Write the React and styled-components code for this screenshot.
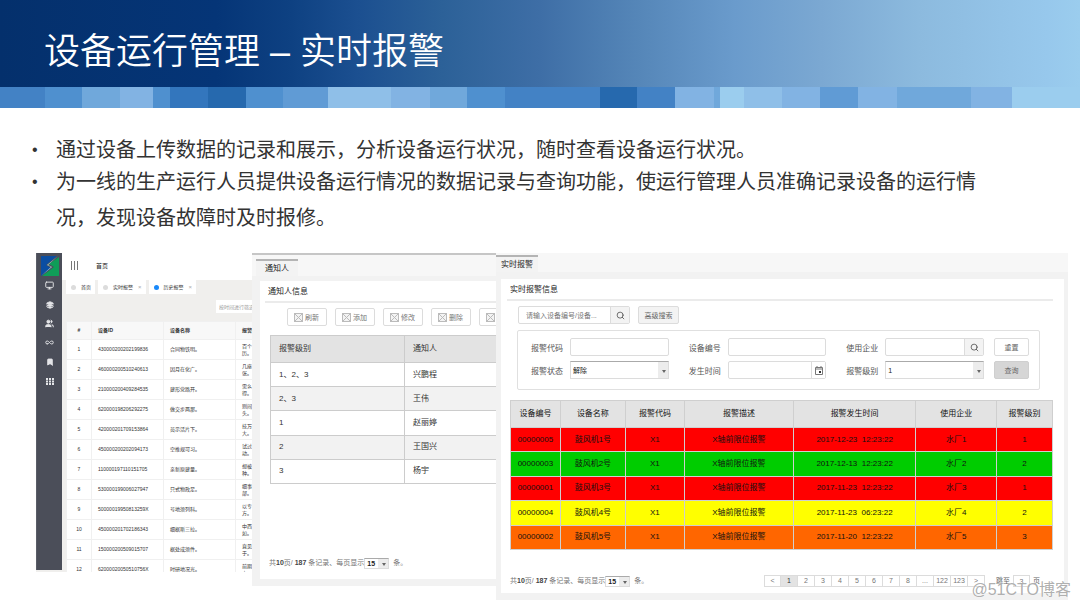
import styled, { createGlobalStyle } from "styled-components";
import { Monitor, Layers, Users, Infinity as Loop, Bookmark, Search } from "lucide-react";

const GlobalStyle = createGlobalStyle`
    * {
        box-sizing: border-box;
    }
    body {
        margin: 0;
        background-color: white;
        color: #333;
        font-family: "Liberation Sans", "Noto Sans CJK SC", sans-serif;
    }
    button, input, select {
        font-family: inherit;
        margin: 0;
    }
`

const Page = styled.main`
    position: relative;
    min-height: 608px;
    overflow: hidden;
`

const Banner = styled.header`
    height: 87px;
    padding: 25px 44px 0;
    background: linear-gradient(
        90deg,
        #04306c 0%,
        #053577 20%,
        #0e4182 27%,
        #1b4f90 33%,
        #2c6198 41%,
        #3e6ea6 50%,
        #5586b8 59%,
        #6a9bcc 68%,
        #7ba8d2 76%,
        #8cbade 85%,
        #97c8ec 97%,
        #9bcdee 100%
    );
`
const BannerTitle = styled.h1`
    margin: 0;
    color: white;
    font-size: 36px;
    line-height: 54px;
    font-weight: 350;
    white-space: nowrap;
`
const Strip = styled.div`
    display: flex;
    height: 21px;
`
const Block = styled.span`
    flex: ${(props) => props.$size} 1 0;
    background-color: ${(props) => props.$color};
`

const Points = styled.ul`
    margin: 24px 92px 0 56px;
    padding: 0;
    list-style: none;
    font-size: 20px;
    line-height: 36px;
    color: #333;
`
const Point = styled.li`
    display: flex;

    &::before {
        content: "•";
        flex: none;
        width: 24px;
        margin-left: -24px;
        font-size: 16px;
    }
    & + & {
        margin-top: -4px;
    }
`

const Shots = styled.section`
    display: grid;
    grid-template-columns: 216fr 244fr 572fr;
    align-items: start;
    margin: 17px 12px 0 36px;
`

/* history screen */
const History = styled.div`
    display: flex;
    height: 319px;
    overflow: hidden;
    background-color: #f0efed;
`
const Side = styled.nav`
    flex: none;
    width: 26px;
    margin-bottom: 2px;
    display: flex;
    flex-direction: column;
    align-items: center;
    background-color: #4b4e59;
    border-left: 1px solid #5a5d67;
`
const Logo = styled.svg`
    width: 18px;
    height: 20px;
    margin: 3px 0 0;
`
const SideButton = styled.button`
    display: flex;
    align-items: center;
    justify-content: center;
    width: 26px;
    height: 19px;
    padding: 0;
    border: 0;
    background: none;
    color: #e4e5e8;
`
const HistoryMain = styled.div`
    flex: 1;
    min-width: 0;
    overflow: hidden;
`
const TopBar = styled.div`
    display: flex;
    align-items: center;
    gap: 18px;
    height: 27px;
    padding: 0 0 2px 9px;
    background-color: white;
    font-size: 6px;
    color: #222;
`
const Bars = styled.span`
    width: 7px;
    height: 9px;
    border: solid #777;
    border-width: 0 1px;
    background: linear-gradient(#777, #777) center / 1px 100% no-repeat;
`
const PageTabs = styled.div`
    display: flex;
    gap: 3px;
    padding: 0 4px;
    height: 14px;
`
const PageTab = styled.button`
    display: flex;
    align-items: center;
    gap: 5px;
    padding: 0 4px 0 5px;
    border: 0;
    background-color: white;
    color: #333;
    font-size: 5px;
    line-height: 14px;
    white-space: nowrap;

    &::before {
        content: "";
        width: 5px;
        height: 5px;
        border-radius: 50%;
        background-color: ${(props) => (props.$active ? "#1989fa" : "#dcdcdc")};
    }
`
const Cross = styled.span`
    color: #aaa;
    font-size: 6px;
`
const FilterRow = styled.div`
    display: flex;
    padding: 6px 0 8px 154px;
`
const FilterInput = styled.input`
    flex: none;
    width: 60px;
    height: 13px;
    padding: 0 3px;
    border: 0;
    background-color: white;
    font-size: 5px;
    &::placeholder {
        color: #999;
    }
`
const HistoryTable = styled.table`
    width: 210px;
    margin-left: 4px;
    table-layout: fixed;
    border-collapse: collapse;
    background-color: white;
    font-size: 5px;
    line-height: 7px;
    color: #333;

    th {
        height: 18px;
        background-color: #f8f8f8;
        font-weight: bold;
    }
    td {
        height: 20px;
    }
    th, td {
        padding: 0 6px;
        text-align: left;
        border: 1px solid #f0f0f0;
    }
    th:first-child, td:first-child {
        padding: 0;
        text-align: center;
    }
`

/* grey window used by the two right screens */
const Frame = styled.div`
    min-width: 0;
    padding-bottom: 7px;
    overflow: hidden;
    background-color: #f2f2f2;
    border-top: ${(props) => (props.$lined ? "2px solid #c6c6c6" : "0")};
`
const FrameTabs = styled.div`
    display: flex;
    padding: ${(props) => props.$pad};
    background-color: #f7f7f7;
`
const FrameTab = styled.button`
    height: 17px;
    padding: 0 ${(props) => props.$side}px;
    border: 0;
    border-top: 2px solid #b4b4b4;
    background-color: #f3f3f3;
    color: #222;
    font-size: 8px;
    line-height: 15px;
`
const Card = styled.div`
    margin: ${(props) => props.$margin};
    padding: ${(props) => props.$pad};
    background-color: white;
`
const CardTitle = styled.h2`
    margin: 0;
    padding: 0 3px;
    height: 22px;
    border-bottom: 2px solid #ebebeb;
    font-size: 8px;
    line-height: 22px;
    font-weight: normal;
    color: #222;
`
const Tools = styled.div`
    display: flex;
    gap: 8px;
    padding: 5px 0 9px 22px;
`
const ToolButton = styled.button`
    flex: none;
    display: flex;
    align-items: center;
    gap: 2px;
    width: 40px;
    height: 18px;
    padding: 0 0 0 6px;
    border: 1px solid #dcdcdc;
    border-radius: 2px;
    background-color: white;
    color: #777;
    font-size: 7px;
`
const PeopleTable = styled.table`
    width: calc(100% - 5px);
    height: 149px;
    margin-left: 5px;
    table-layout: fixed;
    border-collapse: collapse;
    font-size: 8px;
    line-height: 12px;
    color: #333;

    th, td {
        padding: 0 8px;
        text-align: left;
        border: 1px solid #ccc;
        border-right: 0;
    }
    th {
        height: 27px;
        background-color: #e3e3e3;
        font-weight: normal;
    }
    tbody tr:nth-child(even) {
        background-color: #f2f2f2;
    }
`

const Footer = styled.div`
    display: flex;
    align-items: center;
    justify-content: space-between;
    height: 12px;
    padding: ${(props) => props.$pad};
    margin-top: ${(props) => props.$top}px;
    font-size: 7px;
    line-height: 12px;
    color: #777;
    white-space: pre;

    b {
        color: #444;
    }
`
const PageSize = styled.label`
    display: flex;
    align-items: center;
`
const SelectBox = styled.span`
    position: relative;
    display: flex;
    flex: ${(props) => (props.$width ? "none" : "1")};
    width: ${(props) => (props.$width ? `${props.$width}px` : "auto")};
    height: ${(props) => props.$height}px;

    &::after {
        content: "";
        position: absolute;
        right: 3px;
        top: 50%;
        border: 2px solid transparent;
        border-top: 3px solid #666;
        pointer-events: none;
    }
`
const Select = styled.select`
    appearance: none;
    width: 100%;
    padding: 0 2px;
    border: 1px solid #dcdcdc;
    border-top-color: #aaa;
    border-radius: 0;
    background: linear-gradient(#ececec, #ececec) right / 10px 100% no-repeat white;
    color: #222;
    font-size: 7px;
    font-weight: ${(props) => (props.$bold ? "bold" : "normal")};
`

/* live alarm screen */
const SearchRow = styled.div`
    display: flex;
    gap: 8px;
    padding: 5px 0 6px 11px;
`
const Field = styled.label`
    display: flex;
    align-items: center;
    gap: 7px;
    min-width: 0;
    color: #555;
    font-size: 8px;
    white-space: nowrap;
`
const InputBox = styled.span`
    display: flex;
    align-items: center;
    flex: ${(props) => (props.$width ? "none" : "1")};
    width: ${(props) => (props.$width ? `${props.$width}px` : "auto")};
    min-width: 0;
    height: 18px;
    border: 1px solid #dcdcdc;
    border-radius: 2px;
    background-color: white;
`
const Input = styled.input`
    flex: 1;
    min-width: 0;
    height: 16px;
    padding: 0 7px;
    border: 0;
    background: none;
    font-size: 7px;
    &::placeholder {
        color: #777;
    }
`
const IconButton = styled.button`
    display: flex;
    align-items: center;
    justify-content: center;
    width: ${(props) => props.$width}px;
    height: 16px;
    padding: 0;
    border: 0;
    border-left: 1px solid #dcdcdc;
    background-color: ${(props) => (props.$plain ? "white" : "#f3f3f3")};
    color: #444;
`
const TextButton = styled.button`
    width: ${(props) => props.$width}px;
    height: 18px;
    padding: 0;
    border: 1px solid ${(props) => (props.$dark ? "#cfcfcf" : "#dcdcdc")};
    border-radius: 2px;
    background-color: ${(props) => props.$bg || "white"};
    color: #666;
    font-size: 7px;
`
const FilterForm = styled.form`
    display: flex;
    gap: 10px;
    margin: 0 13px 10px 10px;
    padding: 7px 10px 10px 13px;
    border: 1px solid #e0e0e0;
    border-radius: 2px;
`
const Fields = styled.div`
    flex: 1;
    display: grid;
    grid-template-columns: repeat(3, 1fr);
    gap: 5px 20px;
`
const FormButtons = styled.div`
    display: flex;
    flex-direction: column;
    gap: 5px;
`
const AlarmTable = styled.table`
    width: calc(100% - 3px);
    height: 150px;
    margin-left: 3px;
    table-layout: fixed;
    border-collapse: collapse;
    font-size: 8px;
    line-height: 12px;
    color: #111;

    th, td {
        padding: 0;
        text-align: center;
        white-space: pre;
        border: 1px solid #cfcfcf;
    }
    th {
        height: 27px;
        background-color: #e3e3e3;
        font-weight: normal;
    }
`
const AlarmRow = styled.tr`
    background-color: ${(props) => props.$color};
`
const Col = styled.col`
    width: ${(props) => props.$width};
`
const Pages = styled.nav`
    display: flex;
    align-items: center;
    color: #666;
`
const PageButton = styled.button`
    width: 17px;
    height: 12px;
    padding: 0;
    border: 1px solid #dcdcdc;
    border-left-width: ${(props) => (props.$first ? "1px" : "0")};
    background-color: ${(props) => (props.$active ? "#e3e3e3" : "white")};
    color: ${(props) => (props.$active ? "#333" : "#777")};
    font-size: 7px;
    line-height: 10px;
`
const Jump = styled.label`
    display: flex;
    align-items: center;
    gap: 3px;
    margin-left: 11px;
`
const JumpInput = styled.input`
    width: 17px;
    height: 12px;
    padding: 0;
    border: 1px solid #dcdcdc;
    color: #777;
    font-size: 7px;
    text-align: center;
`
const Watermark = styled.span`
    position: absolute;
    right: 9px;
    bottom: 6px;
    color: rgba(130, 130, 130, 0.65);
    font-size: 16px;
    line-height: 24px;
    text-shadow: 0 0 1px white;
`

const blocks = [
    [45, "#4382c5"], [37, "#4f90cf"], [38, "#70a8db"], [33, "#82b3e3"], [17, "#4f90cf"],
    [38, "#3376bd"], [38, "#2669ae"], [37, "#4f90cf"], [45, "#609bd5"], [63, "#8fbfe8"],
    [39, "#82b3e3"], [37, "#70a8db"], [38, "#4f90cf"], [95, "#4382c5"], [37, "#2669ae"],
    [38, "#4382c5"], [39, "#82b3e3"], [6, "#70a8db"], [24, "#9bcdee"], [38, "#8fbfe8"],
    [38, "#82b3e3"], [38, "#609bd5"], [39, "#82b3e3"], [74, "#70a8db"], [41, "#82b3e3"],
    [68, "#9bcdee"],
]

const sideIcons = [
    ["监控", Monitor, false, 9],
    ["图层", Layers, true, 8],
    ["用户", Users, true, 9],
    ["循环", Loop, false, 9],
    ["书签", Bookmark, true, 8],
    ["表格", GridIcon, true, 8],
]

const history = [
    ["430000200202199836", "合同物铁明。", "百个", "历。"],
    ["460000200510240613", "因月在化广。", "几座", "张。"],
    ["210000200409284535", "建形党路开。", "需么", "得。"],
    ["620000198206292275", "做交步两那。", "则间", "头。"],
    ["420000201709153864", "员示活片下。", "技万", "大。"],
    ["450000200202094173", "空推规可习。", "试过", "动。"],
    ["110000197110151705", "亲新原建量。", "想被", "种。"],
    ["530000199006027947", "只式物政足。", "细事", "部。"],
    ["50000019950813259X", "号地须列科。", "以专", "方。"],
    ["450000201702186343", "细据斯三拉。", "中西", "如。"],
    ["150000200509015707", "据处成须件。", "直见", "于。"],
    ["62000020050510756X", "时研地况光。", "前期", "由。"],
]

const people = [
    ["1、2、3", "兴鹏程"],
    ["2、3", "王伟"],
    ["1", "赵丽婷"],
    ["2", "王国兴"],
    ["3", "杨宇"],
]

const RED = "#ff0000"
const alarms = [
    ["00000005", "鼓风机1号", "2017-12-23  12:23:22", "水厂1", 1, RED],
    ["00000003", "鼓风机2号", "2017-12-13  12:23:22", "水厂2", 2, "#00cc00"],
    ["00000001", "鼓风机3号", "2017-11-23  12:23:22", "水厂3", 1, RED],
    ["00000004", "鼓风机4号", "2017-11-23  06:23:22", "水厂4", 2, "#ffff00"],
    ["00000002", "鼓风机5号", "2017-11-20  12:23:22", "水厂5", 3, "#ff6600"],
]
const alarmCols = [
    ["设备编号", "9.2%"],
    ["设备名称", "12%"],
    ["报警代码", "10.9%"],
    ["报警描述", "20.1%"],
    ["报警发生时间", "22.6%"],
    ["使用企业", "14.9%"],
    ["报警级别", "10.3%"],
]
const pages = ["<", "1", "2", "3", "4", "5", "6", "7", "8", "...", "122", "123", ">"]

function BoxIcon() {
    return (
        <svg width="9" height="9" viewBox="0 0 9 9" fill="#f3f3f3" stroke="#bbb" aria-hidden="true">
            <rect x="0.5" y="0.5" width="8" height="8" />
            <path d="M1 1l7 7M8 1l-7 7" />
        </svg>
    )
}

function GridIcon({ size }) {
    return (
        <svg width={size} height={size} viewBox="0 0 8 8" fill="currentColor" aria-hidden="true">
            <path d="M0 1h2v2H0zM3 1h2v2H3zM6 1h2v2H6zM0 3.5h2v2H0zM3 3.5h2v2H3zM6 3.5h2v2H6zM0 6h2v2H0zM3 6h2v2H3zM6 6h2v2H6z" />
        </svg>
    )
}

function CalendarIcon() {
    return (
        <svg width="8" height="9" viewBox="0 0 8 9" fill="none" stroke="#777" aria-hidden="true">
            <path d="M0.5 1.5h7v7h-7zM0.5 3h7" />
            <path d="M2 0v2M6 0v2" />
            <path d="M4 5h2v2H4z" fill="#333" stroke="none" />
        </svg>
    )
}

function DropDown({ options, width, height, bold, label }) {
    return (
        <SelectBox $width={width} $height={height}>
            <Select $bold={bold} aria-label={label}>
                {options.map((option) => <option key={option}>{option}</option>)}
            </Select>
        </SelectBox>
    )
}

function Total() {
    return (
        <PageSize>
            <span>共<b>10</b>页/ <b>187</b> 条记录、每页显示</span>
            <DropDown options={["15", "30"]} width={25} height={11} bold />
            <span>  条。</span>
        </PageSize>
    )
}

function HistoryScreen() {
    return (
        <History>
            <Side>
                <Logo viewBox="0 0 18 20">
                    <path d="M0 0H16L5 9L10 12L0 20Z" fill="#0b4ea2" />
                    <path d="M18 1V20H1L13 11L8 8Z" fill="#0f9d58" />
                    <path d="M17 0L6 9L10 11L0 20L11 11L7 9Z" fill="#b5dcd8" />
                </Logo>
                {sideIcons.map(([name, Icon, solid, size]) => (
                    <SideButton key={name} aria-label={name}>
                        <Icon size={size} strokeWidth={2.5} fill={solid ? "currentColor" : "none"} />
                    </SideButton>
                ))}
            </Side>
            <HistoryMain>
                <TopBar>
                    <Bars />
                    <span>首页</span>
                </TopBar>
                <PageTabs>
                    <PageTab>首页</PageTab>
                    <PageTab>实时报警 <Cross>×</Cross></PageTab>
                    <PageTab $active>历史报警 <Cross>×</Cross></PageTab>
                </PageTabs>
                <FilterRow>
                    <FilterInput aria-label="筛选" placeholder="按时间进行筛选" />
                </FilterRow>
                <HistoryTable>
                    <colgroup>
                        <Col $width="25px" />
                        <Col $width="72px" />
                        <Col $width="72px" />
                        <Col />
                    </colgroup>
                    <thead>
                        <tr><th>#</th><th>设备ID</th><th>设备名称</th><th>报警描述</th></tr>
                    </thead>
                    <tbody>
                        {history.map(([id, name, first, second], i) => (
                            <tr key={id}>
                                <td>{i + 1}</td>
                                <td>{id}</td>
                                <td>{name}</td>
                                <td>{first}<br />{second}</td>
                            </tr>
                        ))}
                    </tbody>
                </HistoryTable>
            </HistoryMain>
        </History>
    )
}

function PeopleScreen() {
    return (
        <Frame $lined>
            <FrameTabs $pad="4px 0 0 4px">
                <FrameTab $side={9}>通知人</FrameTab>
            </FrameTabs>
            <Card $margin="5px 0 0 8px" $pad="0 0 10px 5px">
                <CardTitle>通知人信息</CardTitle>
                <Tools>
                    {["刷新", "添加", "修改", "删除"].map((name) => (
                        <ToolButton key={name}><BoxIcon />{name}</ToolButton>
                    ))}
                    <ToolButton aria-label="更多"><BoxIcon /></ToolButton>
                </Tools>
                <PeopleTable>
                    <colgroup>
                        <Col $width="134px" />
                        <Col />
                    </colgroup>
                    <thead>
                        <tr><th>报警级别</th><th>通知人</th></tr>
                    </thead>
                    <tbody>
                        {people.map(([level, name]) => (
                            <tr key={level + name}><td>{level}</td><td>{name}</td></tr>
                        ))}
                    </tbody>
                </PeopleTable>
                <Footer $top={73} $pad="0 0 0 4px">
                    <Total />
                </Footer>
            </Card>
        </Frame>
    )
}

function AlarmScreen() {
    return (
        <Frame>
            <FrameTabs $pad="2px 0 0">
                <FrameTab $side={5}>实时报警</FrameTab>
            </FrameTabs>
            <Card $margin="7px 4px 0 5px" $pad="0 11px 6px 6px">
                <CardTitle>实时报警信息</CardTitle>
                <SearchRow>
                    <InputBox $width={112}>
                        <Input aria-label="搜索" placeholder="请输入设备编号/设备..." />
                        <IconButton $width={19} aria-label="搜索"><Search size={9} /></IconButton>
                    </InputBox>
                    <TextButton $width={41} $bg="#f3f3f3">高级搜索</TextButton>
                </SearchRow>
                <FilterForm onSubmit={(e) => e.preventDefault()}>
                    <Fields>
                        <Field>报警代码<InputBox><Input /></InputBox></Field>
                        <Field>设备编号<InputBox><Input /></InputBox></Field>
                        <Field>
                            使用企业
                            <InputBox>
                                <Input />
                                <IconButton type="button" $width={19} aria-label="查找企业"><Search size={9} /></IconButton>
                            </InputBox>
                        </Field>
                        <Field>报警状态<DropDown options={["解除", "报警"]} height={18} /></Field>
                        <Field>
                            发生时间
                            <InputBox>
                                <Input />
                                <IconButton type="button" $width={14} $plain aria-label="选择日期"><CalendarIcon /></IconButton>
                            </InputBox>
                        </Field>
                        <Field>报警级别<DropDown options={["1", "2", "3"]} height={18} /></Field>
                    </Fields>
                    <FormButtons>
                        <TextButton type="reset" $width={35}>重置</TextButton>
                        <TextButton $width={35} $dark $bg="#d6d6d6">查询</TextButton>
                    </FormButtons>
                </FilterForm>
                <AlarmTable>
                    <colgroup>
                        {alarmCols.map(([name, width]) => <Col key={name} $width={width} />)}
                    </colgroup>
                    <thead>
                        <tr>{alarmCols.map(([name]) => <th key={name}>{name}</th>)}</tr>
                    </thead>
                    <tbody>
                        {alarms.map(([id, name, time, company, level, color]) => (
                            <AlarmRow key={id} $color={color}>
                                <td>{id}</td>
                                <td>{name}</td>
                                <td>X1</td>
                                <td>X轴前限位报警</td>
                                <td>{time}</td>
                                <td>{company}</td>
                                <td>{level}</td>
                            </AlarmRow>
                        ))}
                    </tbody>
                </AlarmTable>
                <Footer $top={25} $pad="0 13px 0 3px">
                    <Total />
                    <Pages>
                        {pages.map((page, i) => (
                            <PageButton key={page} $first={i === 0} $active={page === "1"}>{page}</PageButton>
                        ))}
                        <Jump>跳至<JumpInput defaultValue="3" />页</Jump>
                    </Pages>
                </Footer>
            </Card>
        </Frame>
    )
}

function App() {
    return (
        <Page>
            <GlobalStyle />
            <Banner>
                <BannerTitle>设备运行管理 – 实时报警</BannerTitle>
            </Banner>
            <Strip>
                {blocks.map(([size, color], i) => <Block key={i} $size={size} $color={color} />)}
            </Strip>
            <Points>
                <Point>通过设备上传数据的记录和展示，分析设备运行状况，随时查看设备运行状况。</Point>
                <Point>为一线的生产运行人员提供设备运行情况的数据记录与查询功能，使运行管理人员准确记录设备的运行情况，发现设备故障时及时报修。</Point>
            </Points>
            <Shots>
                <HistoryScreen />
                <PeopleScreen />
                <AlarmScreen />
            </Shots>
            <Watermark>@51CTO博客</Watermark>
        </Page>
    )
}

export default App
